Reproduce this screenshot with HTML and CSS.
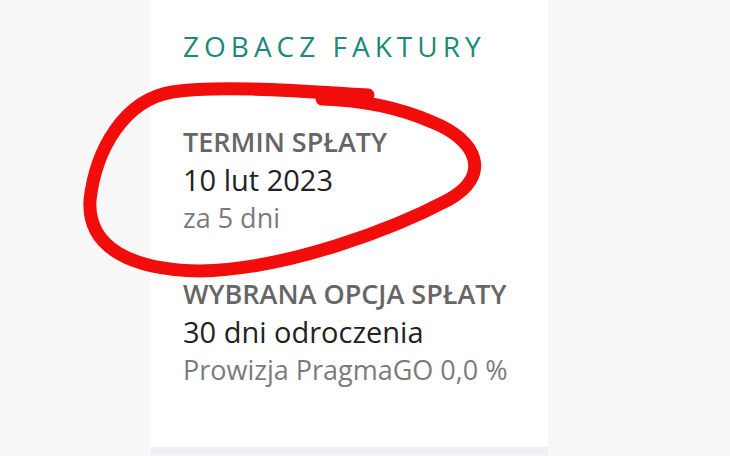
FILE: index.html
```html
<!DOCTYPE html>
<html lang="pl">
<head>
  <meta charset="UTF-8">
  <meta name="viewport" content="width=device-width, initial-scale=1.0">
  <title>Faktura</title>
  <link rel="stylesheet" href="styles.css">
</head>
<body>
  <!-- Invoice summary card -->
  <div class="card">
    <div class="card-body">
      <a class="invoice-link" href="#">ZOBACZ FAKTURY</a>

      <div class="info-group">
        <div class="info-label">TERMIN SPŁATY</div>
        <div class="info-value">10 lut 2023</div>
        <div class="info-note">za 5 dni</div>
      </div>

      <div class="info-group">
        <div class="info-label">WYBRANA OPCJA SPŁATY</div>
        <div class="info-value">30 dni odroczenia</div>
        <div class="info-note">Prowizja PragmaGO 0,0 %</div>
      </div>
    </div>
    <div class="card-footer"></div>
  </div>

  <!-- Hand-drawn marker annotation -->
  <svg class="marker" width="730" height="456" viewBox="0 0 730 456">
    <path d="M368 95 C300 91, 220 85, 172 92 C125 100, 96 148, 90 200 C87 247, 130 270, 200 271 C290 269, 395 228, 448 200 C492 176, 478 140, 432 122 C400 108, 360 100, 322 99"
          fill="none" stroke="#f20d0d" stroke-width="13" stroke-linecap="round" stroke-linejoin="round"/>
  </svg>
</body>
</html>
```

FILE: styles.css
```css
body {
  font-family: "Open Sans", Arial, sans-serif;
  margin: 0;
  height: 456px;
  overflow: hidden;
  background-color: #f8f8f8;
}
.card {
  margin-left: 151px;
  width: 397px;
  background: white;
}
.card-body {
  padding: 27px 32px 58px;
}
.invoice-link {
  display: block;
  font-size: 28px;
  line-height: 38px;
  letter-spacing: 5px;
  color: #1b8a79;
  text-decoration: none;
  margin-bottom: 58px;
}
.info-group {
  font-size: 27px;
  line-height: 38px;
}
.info-group + .info-group {
  margin-top: 38px;
}
.info-label {
  font-weight: 600;
  color: #666;
}
.info-value {
  font-size: 29px;
  color: #222;
}
.info-note {
  color: #7b7b7b;
}
.card-footer {
  height: 8px;
  background: #edf0f3;
}
.marker {
  position: absolute;
  top: 0;
  left: 0;
  pointer-events: none;
}
```
